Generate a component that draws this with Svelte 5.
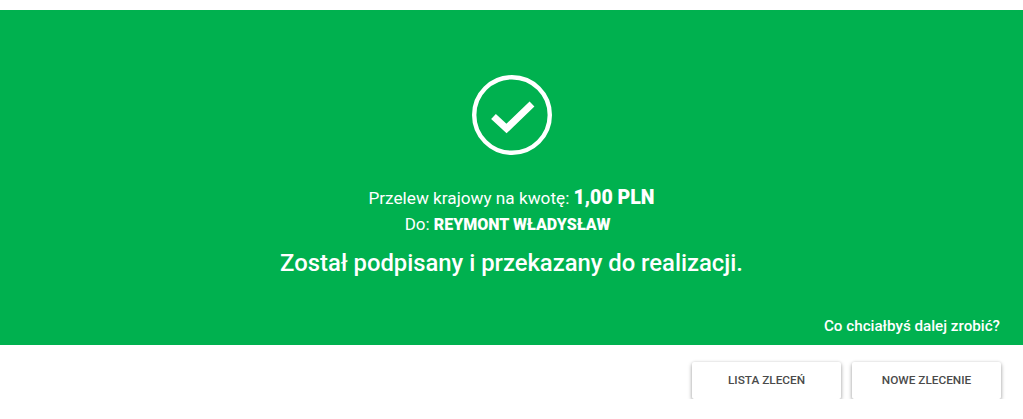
<script>
	let recipient = 'REYMONT WŁADYSŁAW';
	let amount = '1,00 PLN';
</script>

<main class="page">
	<section class="banner">
		<svg class="status-icon" viewBox="0 0 80 80" width="80" height="80" aria-hidden="true">
			<circle cx="40" cy="40" r="37.800" fill="none" stroke="#fff" stroke-width="4.400" />
			<path d="M21.500 41.500 L34.500 53.500 L60 29" fill="none" stroke="#fff" stroke-width="7" />
		</svg>
		<p class="line">Przelew krajowy na kwotę: <strong class="amount">{amount}</strong></p>
		<p class="line to">Do: <strong>{recipient}</strong></p>
		<h1>Został podpisany i przekazany do realizacji.</h1>
		<p class="next">Co chciałbyś dalej zrobić?</p>
	</section>
	<div class="actions">
		<button>LISTA ZLECEŃ</button>
		<button>NOWE ZLECENIE</button>
	</div>
</main>

<style>
	:global(body) {
		margin: 0;
		background: #fff;
	}

	.page {
		padding-top: 10px;
		font-family: Roboto, "Noto Sans", sans-serif;
		color: #fff;
	}

	.banner {
		height: 335px;
		box-sizing: border-box;
		padding: 65px 23px 0;
		background: #00b14f;
		display: flex;
		flex-direction: column;
		align-items: center;
	}

	.status-icon {
		margin-bottom: 31px;
	}

	.line {
		margin: 0;
		font-size: 17.200px;
		line-height: 24px;
		white-space: nowrap;
	}

	.amount {
		font-size: 19.500px;
		font-weight: 900;
	}

	.to {
		font-size: 17px;
		line-height: 22px;
		margin-top: 3px;
		padding-right: 8px;
	}

	.to strong {
		font-size: 16px;
		font-weight: 900;
	}

	h1 {
		margin: 11px 0 0;
		font-size: 23.800px;
		line-height: 32px;
		font-weight: 500;
		white-space: nowrap;
	}

	.next {
		margin: 37px 0 0;
		align-self: flex-end;
		font-size: 15.200px;
		line-height: 20px;
		font-weight: 500;
	}

	.actions {
		display: flex;
		justify-content: flex-end;
		gap: 11px;
		padding: 17px 22px 0 0;
	}

	button {
		width: 149px;
		height: 37px;
		padding: 0 0 1px;
		border: none;
		border-radius: 2px;
		background: #fff;
		color: #4a4a4a;
		font: 500 11.800px Roboto, "Noto Sans", sans-serif;
		box-shadow: 0 2px 4px rgba(0, 0, 0, 0.35), 0 0 3px rgba(0, 0, 0, 0.1);
	}
</style>
